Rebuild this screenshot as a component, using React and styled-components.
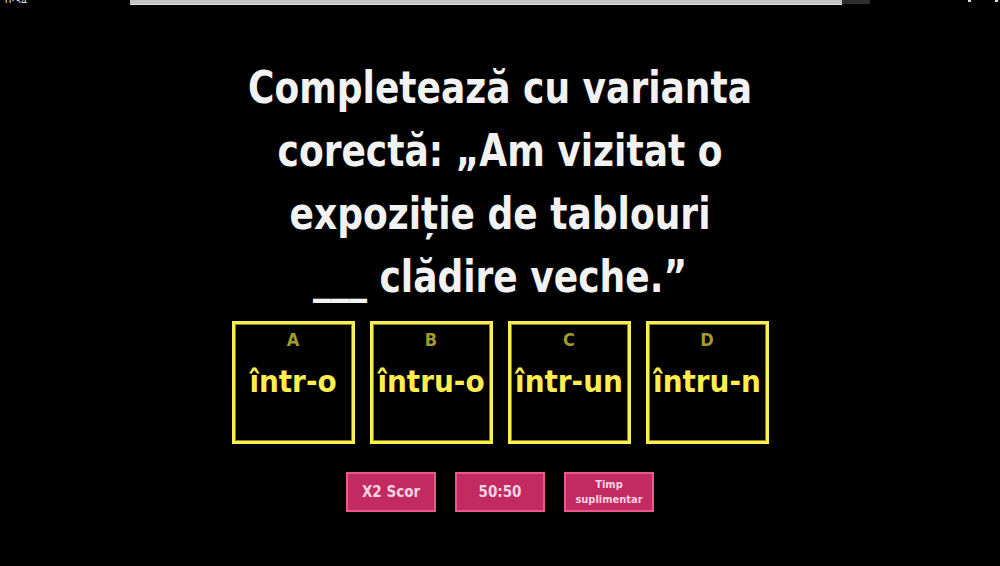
import styled, { createGlobalStyle } from "styled-components";

const GlobalStyle = createGlobalStyle`
  html, body {
    margin: 0;
    padding: 0;
    background: #000;
  }
  body {
    font-family: "DejaVu Sans Condensed", "DejaVu Sans", "Liberation Sans", sans-serif;
    font-stretch: condensed;
  }
`;

const Screen = styled.div`
  width: 1000px;
  height: 566px;
  background: #000;
  display: flex;
  flex-direction: column;
  align-items: center;
  overflow: hidden;
`;

const TopStrip = styled.div`
  width: 100%;
  height: 5px;
  display: flex;
  overflow: hidden;
`;

const Clock = styled.span`
  width: 130px;
  padding-left: 5px;
  box-sizing: border-box;
  color: #ddd;
  font-size: 11px;
  line-height: 3px;
  height: 3px;
  overflow: hidden;
`;

const Track = styled.div`
  width: 740px;
  height: 5px;
  display: flex;
`;

const Filled = styled.div`
  flex: 712;
  background: #c3c3c3;
  border-bottom: 1px solid #e0e0e0;
`;

const Rest = styled.div`
  flex: 28;
  background: #2e2e2e;
  height: 4px;
`;

const Icons = styled.div`
  flex: 1;
  display: flex;
  justify-content: flex-end;
  gap: 24px;
  padding-right: 2px;
`;

const Dot = styled.span`
  width: 3px;
  height: 2px;
  background: #ddd;
`;

const Question = styled.h1`
  margin: 51px 0 0;
  width: 700px;
  text-align: center;
  color: #f2f2f2;
  font-size: 44px;
  line-height: 63px;
  font-weight: 700;
  transform: scaleX(0.91);
  white-space: nowrap;
`;

const Options = styled.div`
  margin-top: 13px;
  display: flex;
  gap: 15px;
`;

const Option = styled.button`
  width: 123px;
  height: 123px;
  box-sizing: border-box;
  background: #000;
  border: 3px solid #fbee4e;
  box-shadow: inset 0 0 0 1px #8a8228;
  display: flex;
  flex-direction: column;
  align-items: center;
  padding: 6px 0 0;
  font-family: inherit;
  cursor: pointer;
`;

const Letter = styled.span`
  color: #a29a30;
  font-size: 18px;
  font-weight: 700;
  line-height: 20px;
`;

const Answer = styled.span`
  margin-top: 15px;
  color: #fbee4e;
  font-size: 31px;
  font-weight: 700;
  line-height: 32px;
  white-space: nowrap;
`;

const Helpers = styled.div`
  margin-top: 28px;
  display: flex;
  gap: 19px;
`;

const Helper = styled.button`
  width: 90px;
  height: 40px;
  box-sizing: border-box;
  background: #c42a62;
  border: 2px solid #e9588d;
  color: #f8d3e3;
  font-family: inherit;
  font-weight: 700;
  font-size: ${(p) => (p.$small ? "11px" : "15px")};
  line-height: ${(p) => (p.$small ? "15px" : "16px")};
  padding: 0 4px;
  cursor: pointer;
`;

const options = [
  ["A", "într-o"],
  ["B", "întru-o"],
  ["C", "într-un"],
  ["D", "întru-n"],
];

export default function App() {
  return (
    <>
      <GlobalStyle />
      <Screen>
        <TopStrip>
          <Clock>0:34</Clock>
          <Track>
            <Filled />
            <Rest />
          </Track>
          <Icons>
            <Dot />
            <Dot />
          </Icons>
        </TopStrip>
        <Question>
          Completează cu varianta
          <br />
          corectă: „Am vizitat o
          <br />
          expoziție de tablouri
          <br />
          ___ clădire veche.”
        </Question>
        <Options>
          {options.map(([l, a]) => (
            <Option key={l}>
              <Letter>{l}</Letter>
              <Answer>{a}</Answer>
            </Option>
          ))}
        </Options>
        <Helpers>
          <Helper>X2 Scor</Helper>
          <Helper>50:50</Helper>
          <Helper $small>
            Timp
            <br />
            suplimentar
          </Helper>
        </Helpers>
      </Screen>
    </>
  );
}
